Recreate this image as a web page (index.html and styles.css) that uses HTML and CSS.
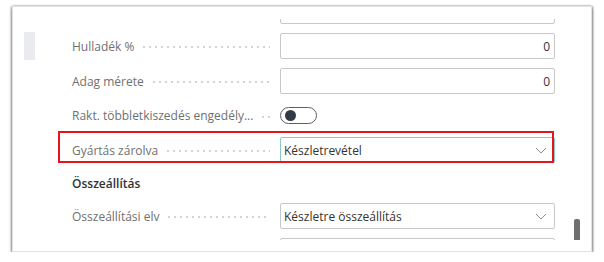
FILE: index.html
```html
<!DOCTYPE html>
<html>

<head>
    <title>Cikk - Gyártás</title>
    <link rel="stylesheet" href="styles.css">
</head>

<body>
    <div class="card">
        <div class="scroll-area">
            <div class="fields">
                <div class="row">
                    <div class="marker-slot"></div>
                    <div class="label"><span class="label-text">Kerekítési pontosság</span><span class="leader"></span></div>
                    <div class="field input num">1</div>
                </div>
                <div class="row">
                    <div class="marker-slot"><div class="marker"></div></div>
                    <div class="label"><span class="label-text">Hulladék %</span><span class="leader"></span></div>
                    <div class="field input num">0</div>
                </div>
                <div class="row">
                    <div class="marker-slot"></div>
                    <div class="label"><span class="label-text">Adag mérete</span><span class="leader"></span></div>
                    <div class="field input num">0</div>
                </div>
                <div class="row row-toggle">
                    <div class="marker-slot"></div>
                    <div class="label"><span class="label-text">Rakt. többletkiszedés engedély...</span><span class="leader"></span></div>
                    <div class="field">
                        <span class="toggle"><span class="knob"></span></span>
                    </div>
                </div>
                <div class="row highlighted">
                    <div class="marker-slot"></div>
                    <div class="label"><span class="label-text">Gyártás zárolva</span><span class="leader"></span></div>
                    <div class="field input select focused">
                        <span>Készletrevétel</span>
                        <svg class="chevron" width="12" height="7" viewBox="0 0 12 7">
                            <path d="M1 1 L6 6 L11 1" fill="none" stroke="#8f8f8f" stroke-width="1" />
                        </svg>
                    </div>
                    <div class="callout"></div>
                </div>
                <div class="row section">
                    <div class="marker-slot"></div>
                    <h3 class="section-title">Összeállítás</h3>
                </div>
                <div class="row">
                    <div class="marker-slot"></div>
                    <div class="label"><span class="label-text">Összeállítási elv</span><span class="leader"></span></div>
                    <div class="field input select">
                        <span>Készletre összeállítás</span>
                        <svg class="chevron" width="12" height="7" viewBox="0 0 12 7">
                            <path d="M1 1 L6 6 L11 1" fill="none" stroke="#8f8f8f" stroke-width="1" />
                        </svg>
                    </div>
                </div>
                <div class="row">
                    <div class="marker-slot"></div>
                    <div class="label"></div>
                    <div class="field input"></div>
                </div>
            </div>
        </div>
        <div class="scroll-thumb"></div>
    </div>
</body>

</html>
```

FILE: styles.css
```css
body {
    margin: 0;
    background-color: #fff;
    font-family: "Open Sans", "Noto Sans", sans-serif;
    font-size: 12px;
    color: #333;
}

.card {
    position: relative;
    width: 578px;
    margin: 6px 0 0 12px;
    padding: 12px 0 11px 0;
    background-color: #fff;
    border: 1px solid #e2e2e2;
    box-shadow: 0 2px 3px rgba(0, 0, 0, 0.45), -1px 0 2px rgba(0, 0, 0, 0.25), 1px 0 2px rgba(0, 0, 0, 0.3);
}

.scroll-area {
    height: 221px;
    overflow: hidden;
}

.fields {
    display: flex;
    flex-direction: column;
    gap: 9px;
    margin-top: -21px;
    padding: 0 36px 0 11px;
}

.row {
    position: relative;
    display: flex;
    align-items: center;
    height: 26px;
    flex-shrink: 0;
}

.row-toggle {
    height: 25px;
}

.marker-slot {
    width: 11px;
    align-self: stretch;
    display: flex;
    align-items: center;
}

.marker {
    width: 11px;
    height: 28px;
    background-color: #e9ebee;
}

.label {
    display: flex;
    align-items: center;
    width: 198px;
    margin: 0 10px 0 37px;
    color: #707070;
    white-space: nowrap;
}

.leader {
    flex: 1;
    height: 2px;
    margin: 2px 0 0 7px;
    background-image: radial-gradient(circle, #d2d2d2 0.7px, transparent 1px);
    background-size: 6px 2px;
}

.field {
    box-sizing: border-box;
    width: 275px;
    height: 26px;
    display: flex;
    align-items: center;
}

.input {
    border: 1px solid #c8c8c8;
    border-radius: 2px;
    padding: 0 4px 0 3px;
    color: #333;
}

.num {
    justify-content: flex-end;
}

.select {
    justify-content: space-between;
}

.select .chevron {
    margin-right: 3px;
}

.focused {
    border-color: #86c9c5;
}

.toggle {
    position: relative;
    display: inline-block;
    box-sizing: border-box;
    width: 37px;
    height: 17px;
    border: 1px solid #5e5e5e;
    border-radius: 9px;
}

.knob {
    position: absolute;
    left: 4px;
    top: 2px;
    width: 11px;
    height: 11px;
    border-radius: 50%;
    background-color: #323a45;
}

.callout {
    position: absolute;
    left: 34px;
    top: -6px;
    width: 496px;
    height: 32px;
    box-sizing: border-box;
    border: 2px solid #e8141c;
}

.section {
    height: 22px;
}

.section-title {
    margin: 0 0 0 37px;
    font-size: 12px;
    font-weight: 600;
    color: #333;
}

.scroll-thumb {
    position: absolute;
    left: 561px;
    top: 212px;
    width: 6px;
    height: 21px;
    border-radius: 2px 2px 0 0;
    background-color: #707070;
}
```
